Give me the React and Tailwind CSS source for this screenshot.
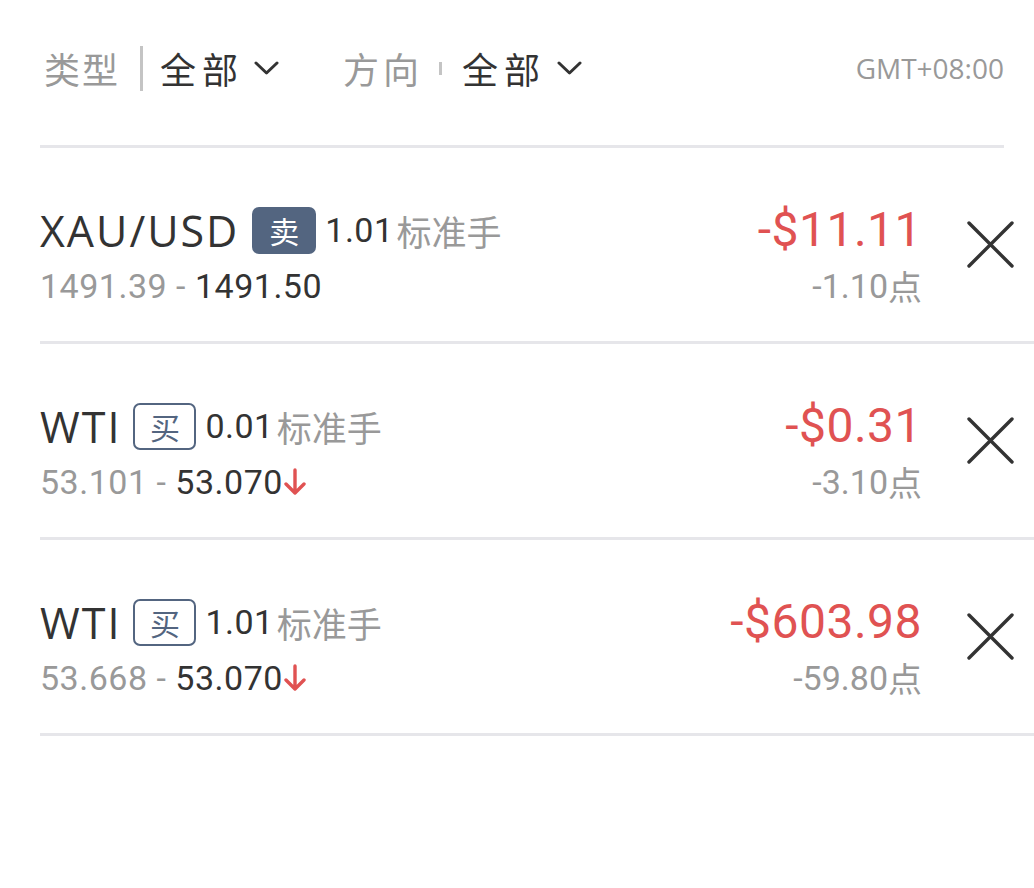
import React from "react";

const positions = [
  {
    symbol: "XAU/USD",
    side: "卖",
    lots: "1.01",
    open: "1491.39",
    current: "1491.50",
    down: false,
    profit: "-$11.11",
    points: "-1.10",
  },
  {
    symbol: "WTI",
    side: "买",
    lots: "0.01",
    open: "53.101",
    current: "53.070",
    down: true,
    profit: "-$0.31",
    points: "-3.10",
  },
  {
    symbol: "WTI",
    side: "买",
    lots: "1.01",
    open: "53.668",
    current: "53.070",
    down: true,
    profit: "-$603.98",
    points: "-59.80",
  },
];

const cjk = "font-['Noto_Sans_CJK_SC',sans-serif]";
const num = "font-['Roboto','Noto_Sans_CJK_SC',sans-serif]";

const Chevron = () => (
  <svg width="25" height="14" viewBox="0 0 25 14" fill="none">
    <path d="M2 2L12.5 12L23 2" stroke="#333" strokeWidth="3" strokeLinecap="round" strokeLinejoin="round" />
  </svg>
);

const Close = () => (
  <svg width="47" height="47" viewBox="0 0 47 47" fill="none">
    <path d="M2 2L45 45M45 2L2 45" stroke="#333" strokeWidth="3.4" strokeLinecap="round" />
  </svg>
);

const DownArrow = () => (
  <svg width="22" height="28" viewBox="0 0 22 28" fill="none" className="ml-[1px]">
    <path d="M11 2V25M2 16L11 25L20 16" stroke="#e05252" strokeWidth="3.4" strokeLinecap="round" strokeLinejoin="round" />
  </svg>
);

const Row = ({ p }) => (
  <div className="flex items-start border-b-[3px] border-[#e6e6ea] ml-[40px] pr-[20px] h-[196px]">
    <div className="flex-1 flex flex-col pt-[58px]">
      <div className="flex items-center h-[48px]">
        <span className="font-['Open_Sans',sans-serif] text-[43px] leading-none text-[#333] tracking-[2px]">
          {p.symbol}
        </span>
        {p.side === "卖" ? (
          <span className={`${cjk} ml-[13px] w-[64px] h-[47px] rounded-[7px] bg-[#536580] text-white text-[30px] flex items-center justify-center`}>
            {p.side}
          </span>
        ) : (
          <span className={`${cjk} ml-[12px] w-[63px] h-[47px] rounded-[7px] border-[2.5px] border-[#536580] text-[#536580] text-[30px] flex items-center justify-center`}>
            {p.side}
          </span>
        )}
        <span className={`${num} ml-[9px] text-[34px] text-[#333] leading-none tracking-[0.5px]`}>{p.lots}</span>
        <span className={`${cjk} ml-[3px] text-[35px] text-[#999] leading-none`}>标准手</span>
      </div>
      <div className={`${num} flex items-center mt-[12px] h-[40px] text-[34px] leading-none tracking-[0.5px]`}>
        <span className="text-[#999]">{p.open} - </span>
        <span className="text-[#333] ml-[9px]">{p.current}</span>
        {p.down && <DownArrow />}
      </div>
    </div>
    <div className="flex flex-col items-end pt-[58px]">
      <div className={`${num} h-[48px] flex items-center text-[48px] leading-none text-[#e05252] tracking-[0.5px]`}>
        {p.profit}
      </div>
      <div className={`${num} mt-[12px] h-[40px] flex items-center text-[34px] leading-none text-[#999]`}>
        {p.points}
        <span className={cjk}>点</span>
      </div>
    </div>
    <button className="ml-[45px] self-center flex items-center">
      <Close />
    </button>
  </div>
);

export default function App() {
  return (
    <div className="w-[1034px] h-[888px] bg-white overflow-hidden">
      <div className="mx-[40px] mr-[30px] h-[148px] pt-[44px] border-b-[3px] border-[#e6e6ea] flex items-start">
        <div className={`${cjk} flex items-center h-[48px] text-[36px] leading-none`}>
          <span className="text-[#999] ml-[4px] tracking-[2px]">类型</span>
          <span className="ml-[20px] w-[3px] h-[45px] bg-[#c4c4c4]" />
          <span className="ml-[17px] text-[#333] tracking-[6px]">全部</span>
          <span className="ml-[10px]"><Chevron /></span>
          <span className="ml-[64px] text-[#999] tracking-[4px]">方向</span>
          <span className="ml-[16px] w-[3px] h-[13px] bg-[#c4c4c4]" />
          <span className="ml-[20px] text-[#333] tracking-[6px]">全部</span>
          <span className="ml-[11px]"><Chevron /></span>
        </div>
        <div className="flex-1" />
        <div className="h-[48px] flex items-center font-['Open_Sans',sans-serif] text-[28px] text-[#999]">
          GMT+08:00
        </div>
      </div>
      {positions.map((p, i) => (
        <Row key={i} p={p} />
      ))}
    </div>
  );
}
